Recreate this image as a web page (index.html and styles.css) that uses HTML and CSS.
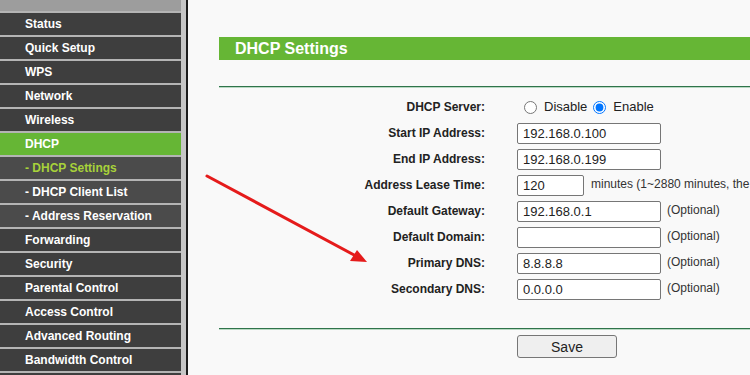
FILE: index.html
```html
<!DOCTYPE html>
<html lang="en">
<head>
  <meta charset="UTF-8" />
  <title>DHCP Settings</title>
  <link rel="stylesheet" href="styles.css">
</head>
<body>
  <div class="page">
    <nav class="sidebar">
      <div class="top-band"></div>
      <a class="item">Status</a>
      <a class="item">Quick Setup</a>
      <a class="item">WPS</a>
      <a class="item">Network</a>
      <a class="item">Wireless</a>
      <a class="item active">DHCP</a>
      <a class="item sub current">- DHCP Settings</a>
      <a class="item sub">- DHCP Client List</a>
      <a class="item sub">- Address Reservation</a>
      <a class="item">Forwarding</a>
      <a class="item">Security</a>
      <a class="item">Parental Control</a>
      <a class="item">Access Control</a>
      <a class="item">Advanced Routing</a>
      <a class="item">Bandwidth Control</a>
      <div class="item"></div>
    </nav>

    <main class="main">
      <h2 class="title">DHCP Settings</h2>
      <div class="rule"></div>

      <form class="form">
        <label>DHCP Server:</label>
        <div class="field">
          <label class="radio"><input type="radio" name="server" /> Disable</label>
          <label class="radio"><input type="radio" name="server" checked /> Enable</label>
        </div>

        <label>Start IP Address:</label>
        <div class="field"><input type="text" value="192.168.0.100" /></div>

        <label>End IP Address:</label>
        <div class="field"><input type="text" value="192.168.0.199" /></div>

        <label>Address Lease Time:</label>
        <div class="field">
          <input type="text" class="short" value="120" />
          <span class="hint">minutes (1~2880 minutes, the</span>
        </div>

        <label>Default Gateway:</label>
        <div class="field"><input type="text" value="192.168.0.1" /><span class="hint">(Optional)</span></div>

        <label>Default Domain:</label>
        <div class="field"><input type="text" value="" /><span class="hint">(Optional)</span></div>

        <label>Primary DNS:</label>
        <div class="field"><input type="text" value="8.8.8.8" /><span class="hint">(Optional)</span></div>

        <label>Secondary DNS:</label>
        <div class="field"><input type="text" value="0.0.0.0" /><span class="hint">(Optional)</span></div>
      </form>

      <div class="rule"></div>
      <div class="actions">
        <button type="button">Save</button>
      </div>
    </main>

    <!-- annotation arrow drawn over the page -->
    <svg class="arrow" width="750" height="375" viewBox="0 0 750 375">
      <line x1="207" y1="176" x2="356" y2="256" stroke="#e51b1b" stroke-width="3" stroke-linecap="round" />
      <polygon points="367,262 350,261 357,250" fill="#e51b1b" />
    </svg>
  </div>
</body>
</html>
```

FILE: styles.css
```css
body {
  margin: 0;
  background: #f9f9f9;
  font-family: "Liberation Sans", Arial, sans-serif;
  color: #222;
}
.page {
  position: relative;
  display: flex;
  width: 750px;
  height: 375px;
  overflow: hidden;
}
.sidebar {
  width: 181px;
  flex-shrink: 0;
  background: #b4b4b4;
  border-right: 5px solid #c6c6c6;
  box-shadow: 2px 0 0 #1c1c1c;
  display: flex;
  flex-direction: column;
  gap: 2px;
}
.top-band {
  height: 11px;
  flex-shrink: 0;
  background: #9d9d9d;
}
.item {
  display: block;
  height: 22px;
  line-height: 22px;
  flex-shrink: 0;
  padding-left: 25px;
  background: #3e3e3e;
  color: #fff;
  font-size: 12px;
  font-weight: bold;
  white-space: nowrap;
}
.item.sub {
  background: #4b4b4b;
}
.item.active {
  background: #66b635;
}
.item.current {
  color: #a8d23a;
}
.main {
  flex: 1;
  margin-left: 2px;
  padding-left: 31px;
  padding-top: 37px;
  min-width: 0;
}
.title {
  margin: 0;
  height: 23px;
  line-height: 23px;
  padding-left: 16px;
  background: #66b635;
  color: #fff;
  font-size: 16px;
  font-weight: bold;
  width: 600px;
}
.rule {
  margin-top: 26px;
  height: 0;
  width: 600px;
  border-top: 1px solid #2f744b;
  border-bottom: 1px solid #b9d9c3;
}
.form {
  display: grid;
  grid-template-columns: 266px 1fr;
  grid-auto-rows: 26px;
  column-gap: 32px;
  align-items: center;
  padding-top: 6px;
  margin: 0;
}
.form > label {
  text-align: right;
  font-size: 12px;
  font-weight: bold;
  color: #222;
}
.field {
  display: flex;
  align-items: center;
  white-space: nowrap;
  font-size: 12px;
  color: #333;
}
.field input[type="text"] {
  box-sizing: border-box;
  width: 144px;
  height: 21px;
  margin: 0;
  padding: 1px 5px;
  border: 1px solid #767676;
  border-radius: 2px;
  background: #fff;
  font-family: "Liberation Sans", Arial, sans-serif;
  font-size: 13px;
  color: #222;
}
.field input.short {
  width: 67px;
}
.hint {
  margin-left: 6px;
  margin-top: -2px;
}
.field input.short + .hint {
  margin-left: 7px;
}
.radio {
  display: flex;
  align-items: center;
  font-size: 13px;
  color: #222;
  margin-top: -1px;
}
.radio input {
  margin: 2px 7px 0 7px;
}
.radio + .radio input {
  margin-left: 6px;
}
.actions {
  padding-top: 5px;
  padding-left: 298px;
}
button {
  width: 100px;
  height: 23px;
  background: #efefef;
  border: 1px solid #767676;
  border-radius: 3px;
  font-family: "Liberation Sans", Arial, sans-serif;
  font-size: 14px;
  color: #222;
}
.arrow {
  position: absolute;
  left: 0;
  top: 0;
  pointer-events: none;
}
```
